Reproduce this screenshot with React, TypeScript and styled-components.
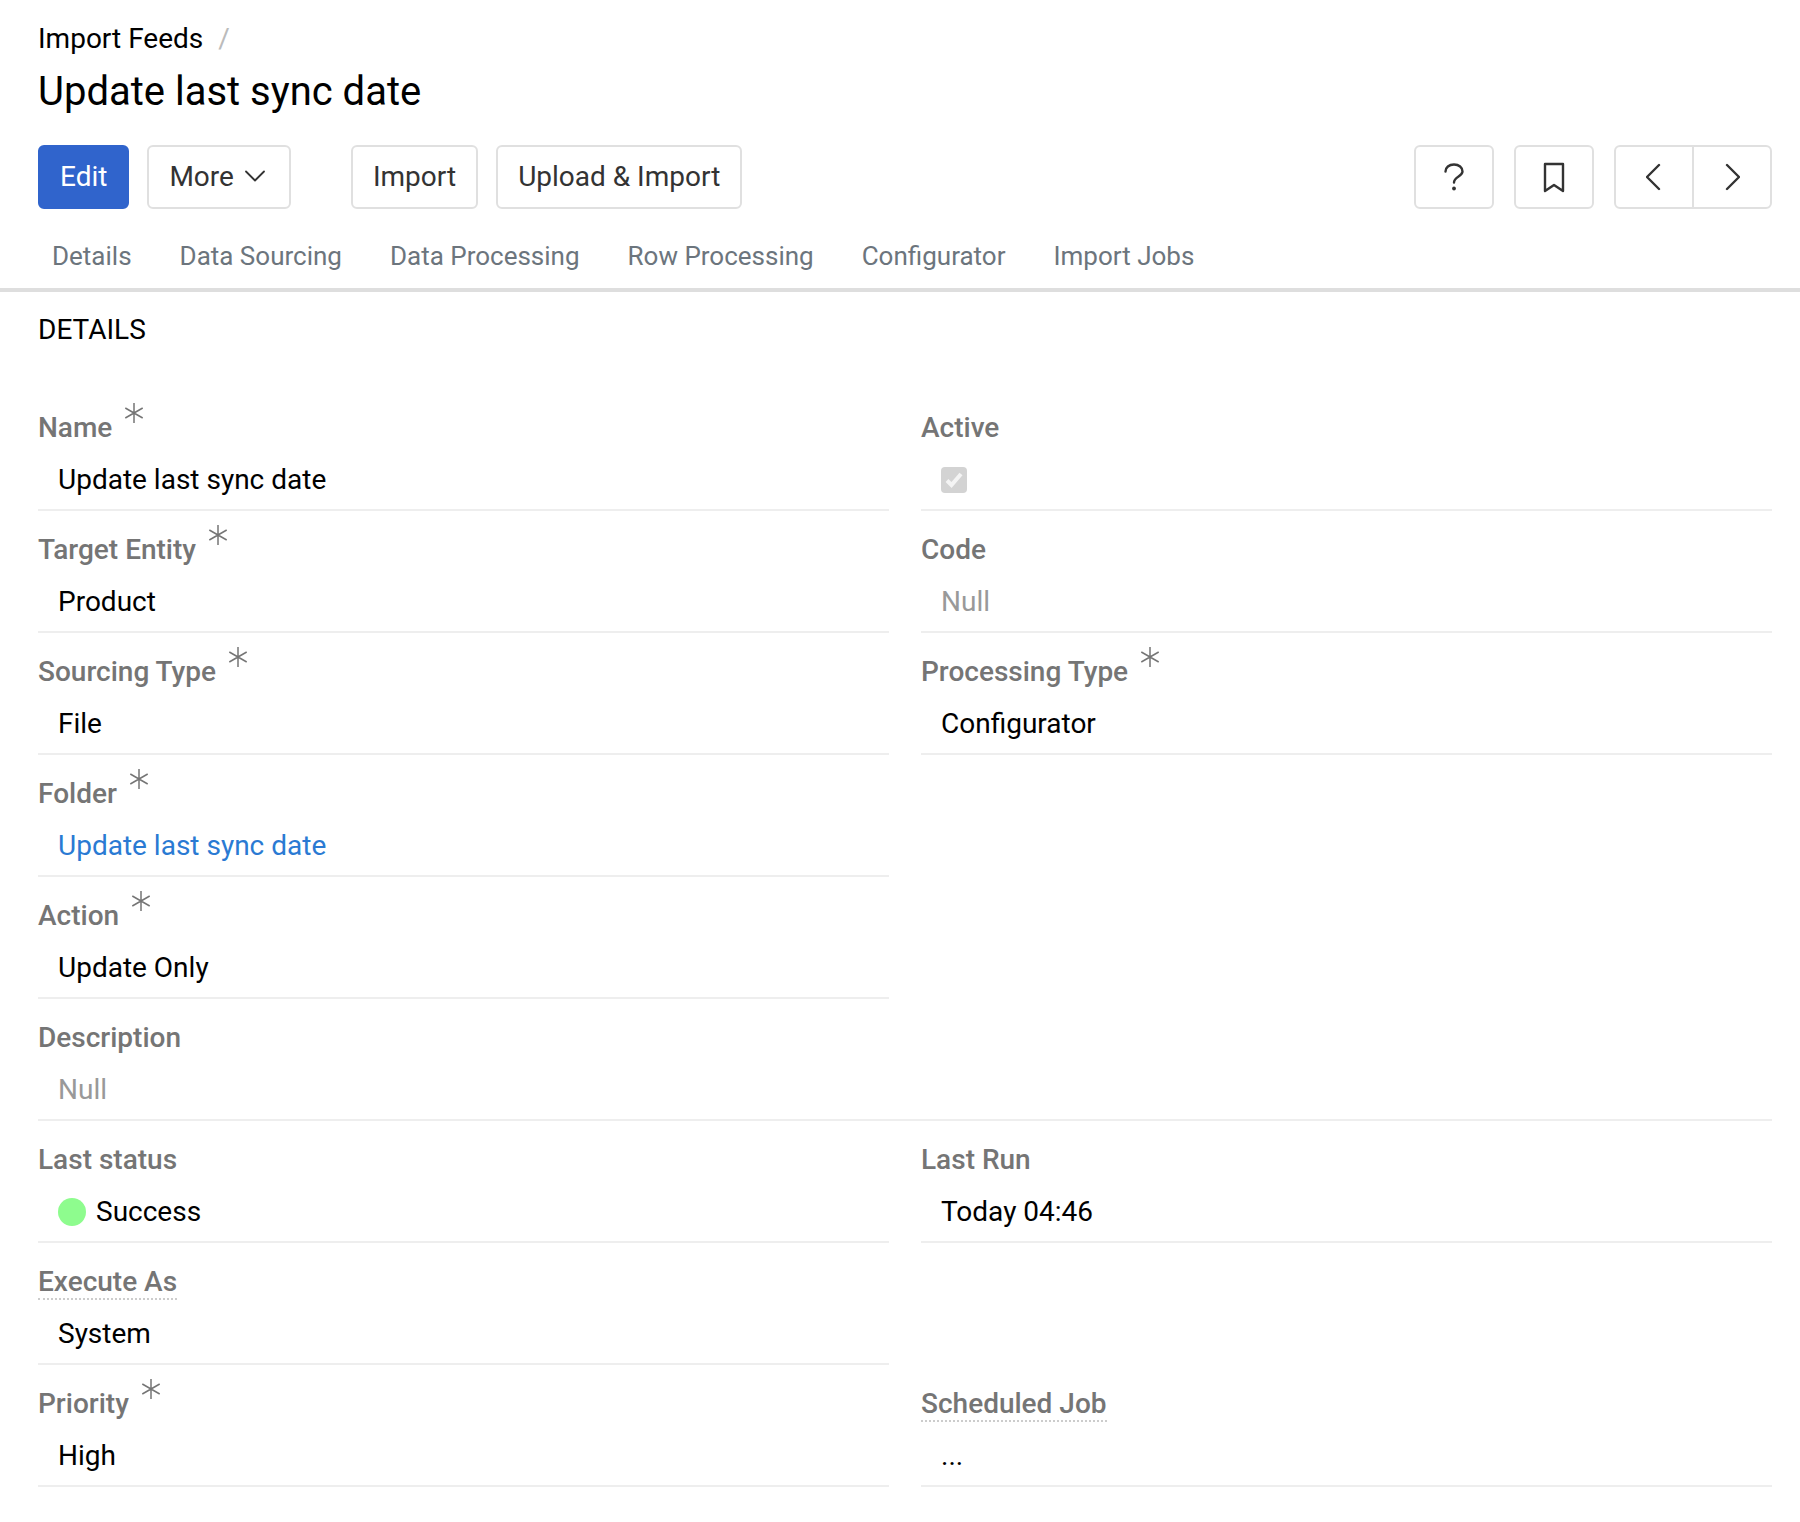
import React from 'react';
import styled, { createGlobalStyle } from 'styled-components';

const Global = createGlobalStyle`
  html, body { margin: 0; padding: 0; background: #fff; }
  body { font-family: Roboto, "Liberation Sans", sans-serif; color: #000; }
`;

const Page = styled.div`
  width: 1800px;
  height: 1522px;
  overflow: hidden;
`;

const Header = styled.header`
  padding: 22px 28px 0 38px;
`;

const Crumbs = styled.div`
  display: flex;
  align-items: center;
  gap: 15px;
  font-size: 28px;
  line-height: 34px;
`;

const Slash = styled.span`
  color: #bbb;
`;

const Title = styled.h1`
  margin: 12px 0 0;
  font-size: 40px;
  line-height: 48px;
  font-weight: 400;
`;

const Toolbar = styled.div`
  display: flex;
  align-items: center;
  margin-top: 29px;
`;

const Group = styled.div`
  display: flex;
  gap: 18px;
  margin-right: 60px;
`;

const Spacer = styled.div`
  flex: 1;
`;

const Button = styled.button<{ $primary?: boolean; $menu?: boolean }>`
  height: 64px;
  padding: 0 ${p => (p.$menu ? '23px' : '20px')} 2px 20px;
  box-sizing: border-box;
  display: inline-flex;
  align-items: center;
  gap: 10px;
  font-family: inherit;
  font-size: 28px;
  border-radius: 6px;
  border: 2px solid ${p => (p.$primary ? '#3064cc' : '#e0e0e0')};
  background: ${p => (p.$primary ? '#3064cc' : '#fff')};
  color: ${p => (p.$primary ? '#fff' : '#333')};
`;

const IconGroup = styled.div`
  display: flex;
  gap: 20px;
`;

const IconButton = styled.button`
  width: 80px;
  height: 64px;
  box-sizing: border-box;
  display: flex;
  align-items: center;
  justify-content: center;
  padding: 0;
  border: 2px solid #e0e0e0;
  border-radius: 6px;
  background: #fff;
  color: #333;
`;

const Segmented = styled.div`
  display: flex;
  width: 158px;
  height: 64px;
  box-sizing: border-box;
  border: 2px solid #e0e0e0;
  border-radius: 6px;
`;

const Segment = styled.button`
  flex: 1;
  display: flex;
  align-items: center;
  justify-content: center;
  padding: 0;
  border: 0;
  background: none;
  color: #333;
  & + & {
    border-left: 2px solid #e0e0e0;
  }
`;

const Tabs = styled.nav`
  display: flex;
  gap: 20px;
  height: 83px;
  padding: 0 0 0 38px;
  box-sizing: border-box;
  border-bottom: 4px solid #dedede;
`;

const Tab = styled.a`
  padding: 31px 14px 0;
  font-size: 26px;
  line-height: 32px;
  color: #6c757d;
`;

const Content = styled.main`
  padding: 0 28px 0 38px;
`;

const Heading = styled.h2`
  margin: 0;
  padding-top: 22px;
  height: 97px;
  box-sizing: border-box;
  font-size: 28px;
  line-height: 32px;
  font-weight: 400;
`;

const Grid = styled.div`
  display: grid;
  grid-template-columns: 1fr 1fr;
  column-gap: 32px;
  grid-auto-rows: 122px;
`;

const Field = styled.div<{ $wide?: boolean; $empty?: boolean }>`
  box-sizing: border-box;
  border-bottom: 2px solid ${p => (p.$empty ? 'transparent' : '#eee')};
  ${p => (p.$wide ? 'grid-column: 1 / -1;' : '')}
`;

const LabelRow = styled.div`
  display: flex;
  align-items: flex-start;
  height: 73px;
  padding-top: 22px;
  box-sizing: border-box;
`;

const Label = styled.span<{ $hint?: boolean }>`
  font-size: 28px;
  line-height: 34px;
  height: 33px;
  font-weight: 500;
  color: #757575;
  ${p => (p.$hint ? 'border-bottom: 2px dotted #ccc;' : '')}
`;

const Star = styled.svg`
  width: 22px;
  height: 22px;
  margin: -9px 0 0 11px;
  stroke: #757575;
  stroke-width: 1.5;
  fill: none;
`;

const Value = styled.div<{ $muted?: boolean; $link?: boolean }>`
  display: flex;
  align-items: center;
  gap: 10px;
  padding-left: 20px;
  height: 36px;
  font-size: 28px;
  line-height: 32px;
  color: ${p => (p.$muted ? '#999' : p.$link ? '#2a7ad3' : '#000')};
`;

const Dot = styled.span`
  width: 28px;
  height: 28px;
  border-radius: 50%;
  background: #8efc8e;
`;

const Check = styled.span`
  width: 26px;
  height: 26px;
  border-radius: 4px;
  background: #d3d3d3;
  display: flex;
  align-items: center;
  justify-content: center;
`;

const Asterisk = () => (
  <Star viewBox="0 0 22 22">
    <path d="M11 1v20M2.3 6l17.4 10M19.7 6L2.3 16" />
  </Star>
);

type F = { label?: string; req?: boolean; hint?: boolean; value?: React.ReactNode; muted?: boolean; link?: boolean; wide?: boolean };

const fields: F[] = [
  { label: 'Name', req: true, value: 'Update last sync date' },
  { label: 'Active', value: (
    <Check>
      <svg width="20" height="20" viewBox="0 0 20 20" fill="none" stroke="#f4f4f4" strokeWidth="4">
        <path d="M3 10.5l4.5 4.5L17 4" />
      </svg>
    </Check>
  ) },
  { label: 'Target Entity', req: true, value: 'Product' },
  { label: 'Code', value: 'Null', muted: true },
  { label: 'Sourcing Type', req: true, value: 'File' },
  { label: 'Processing Type', req: true, value: 'Configurator' },
  { label: 'Folder', req: true, value: 'Update last sync date', link: true },
  {},
  { label: 'Action', req: true, value: 'Update Only' },
  {},
  { label: 'Description', value: 'Null', muted: true, wide: true },
  { label: 'Last status', value: <><Dot />Success</> },
  { label: 'Last Run', value: 'Today 04:46' },
  { label: 'Execute As', hint: true, value: 'System' },
  {},
  { label: 'Priority', req: true, value: 'High' },
  { label: 'Scheduled Job', hint: true, value: '...' },
];

const tabs = ['Details', 'Data Sourcing', 'Data Processing', 'Row Processing', 'Configurator', 'Import Jobs'];

const iconProps = { fill: 'none', stroke: 'currentColor', strokeWidth: 2.4, strokeLinecap: 'round' as const, strokeLinejoin: 'round' as const };

export default function App() {
  return (
    <Page>
      <Global />
      <Header>
        <Crumbs>
          <span>Import Feeds</span>
          <Slash>/</Slash>
        </Crumbs>
        <Title>Update last sync date</Title>
        <Toolbar>
          <Group>
            <Button $primary>Edit</Button>
            <Button $menu>
              More
              <svg width="22" height="14" viewBox="0 0 22 14" {...iconProps} strokeWidth={1.8}>
                <path d="M2 2.5l9 9 9-9" />
              </svg>
            </Button>
          </Group>
          <Group>
            <Button>Import</Button>
            <Button>Upload &amp; Import</Button>
          </Group>
          <Spacer />
          <IconGroup>
            <IconButton aria-label="Help">
              <svg width="20" height="28" viewBox="0 0 20 28" {...iconProps}>
                <path d="M1.5 8.5C1.5 4.5 5 1.5 10 1.5s8.5 3 8.5 7c0 5-8.5 5-8.5 11" />
                <circle cx="10" cy="25.5" r="1.9" fill="currentColor" stroke="none" />
              </svg>
            </IconButton>
            <IconButton aria-label="Bookmark">
              <svg width="22" height="32" viewBox="0 0 22 32" {...iconProps}>
                <path d="M2 3h18v27l-9-6-9 6z" />
              </svg>
            </IconButton>
            <Segmented>
              <Segment aria-label="Previous">
                <svg width="16" height="28" viewBox="0 0 16 28" {...iconProps}>
                  <path d="M13 2L1 14l12 12" />
                </svg>
              </Segment>
              <Segment aria-label="Next">
                <svg width="16" height="28" viewBox="0 0 16 28" {...iconProps}>
                  <path d="M3 2l12 12L3 26" />
                </svg>
              </Segment>
            </Segmented>
          </IconGroup>
        </Toolbar>
      </Header>
      <Tabs>
        {tabs.map(t => <Tab key={t}>{t}</Tab>)}
      </Tabs>
      <Content>
        <Heading>DETAILS</Heading>
        <Grid>
          {fields.map((f, i) => (
            <Field key={i} $wide={f.wide} $empty={!f.label}>
              {f.label && (
                <>
                  <LabelRow>
                    <Label $hint={f.hint}>{f.label}</Label>
                    {f.req && <Asterisk />}
                  </LabelRow>
                  <Value $muted={f.muted} $link={f.link}>{f.value}</Value>
                </>
              )}
            </Field>
          ))}
        </Grid>
      </Content>
    </Page>
  );
}
